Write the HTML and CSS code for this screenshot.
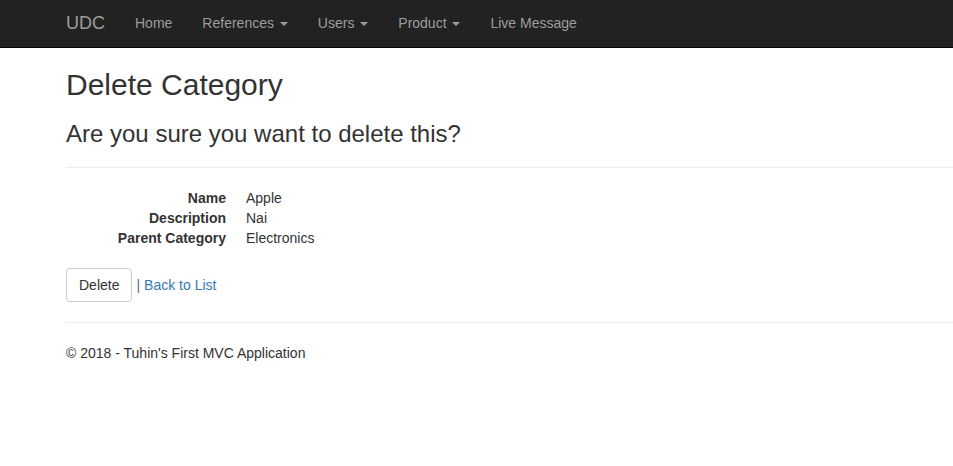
FILE: index.html
```html
<!DOCTYPE html>
<html>
<head>
<meta charset="utf-8">
<title>Delete Category</title>
<link rel="stylesheet" href="styles.css">
</head>
<body>
<nav class="navbar">
  <div class="nav-inner">
    <a class="brand" href="#">UDC</a>
    <ul class="nav">
      <li><a href="#">Home</a></li>
      <li><a href="#">References <span class="caret"></span></a></li>
      <li><a href="#">Users <span class="caret"></span></a></li>
      <li><a href="#">Product <span class="caret"></span></a></li>
      <li><a href="#">Live Message</a></li>
    </ul>
  </div>
</nav>
<div class="body-content">
  <h2 class="title">Delete Category</h2>
  <h3 class="subtitle">Are you sure you want to delete this?</h3>
  <hr class="rule">
  <dl class="details">
    <dt>Name</dt><dd>Apple</dd>
    <dt>Description</dt><dd>Nai</dd>
    <dt>Parent Category</dt><dd>Electronics</dd>
  </dl>
  <form class="actions">
    <button type="button" class="btn">Delete</button>
    <span class="sep">|</span>
    <a class="link" href="#">Back to List</a>
  </form>
  <hr class="rule footer-rule">
  <footer class="footer">
    <p>&copy; 2018 - Tuhin's First MVC Application</p>
  </footer>
</div>
</body>
</html>
```
FILE: styles.css
```css
* { box-sizing: border-box; }
html, body { margin: 0; padding: 0; }
body {
  font-family: "Liberation Sans", Arial, Helvetica, sans-serif;
  font-size: 14px;
  line-height: 20px;
  color: #333;
  background: #fff;
  overflow: hidden;
}
.navbar {
  background: #222;
  border-bottom: 1px solid #080808;
  height: 48px;
}
.nav-inner {
  display: flex;
  align-items: center;
  height: 47px;
  padding-left: 51px;
  padding-bottom: 2px;
}
.brand {
  font-size: 18px;
  line-height: 20px;
  padding: 0 15px;
  color: #9d9d9d;
  text-decoration: none;
}
.nav {
  display: flex;
  list-style: none;
  margin: 0;
  padding: 0;
}
.nav a {
  display: block;
  padding: 0 15px;
  line-height: 20px;
  color: #9d9d9d;
  text-decoration: none;
}
.caret {
  display: inline-block;
  width: 0;
  height: 0;
  margin-left: 2px;
  vertical-align: middle;
  border-top: 4px solid;
  border-left: 4px solid transparent;
  border-right: 4px solid transparent;
}
.body-content {
  padding-left: 66px;
}
.title {
  margin: 20px 0 10px;
  font-size: 30px;
  line-height: 33px;
  font-weight: 500;
}
.subtitle {
  margin: 20px 0 0;
  font-size: 24px;
  line-height: 26px;
  font-weight: 500;
}
.rule {
  margin: 20px 0 20px;
  border: 0;
  border-top: 1px solid #eee;
  height: 0;
}
.details {
  display: grid;
  grid-template-columns: 160px 1fr;
  column-gap: 20px;
  margin: 0 0 20px;
}
.details dt {
  font-weight: bold;
  text-align: right;
}
.details dd { margin: 0; }
.actions {
  display: flex;
  align-items: center;
  margin: 0;
}
.btn {
  font-family: inherit;
  font-size: 14px;
  line-height: 20px;
  padding: 6px 12px;
  height: 34px;
  color: #333;
  background: #fff;
  border: 1px solid #ccc;
  border-radius: 4px;
}
.sep { margin-left: 4px; margin-right: 4px; color: #5a6b80; }
.link { color: #337ab7; text-decoration: none; }
.footer-rule { margin-top: 20px; margin-bottom: 20px; }
.footer p { margin: 0; }
```
